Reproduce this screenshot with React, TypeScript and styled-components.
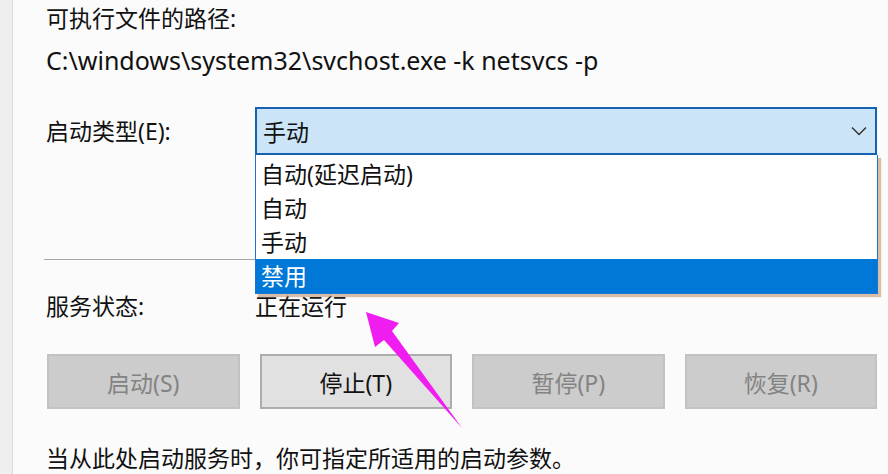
import styled, { createGlobalStyle } from "styled-components"

const GlobalStyle = createGlobalStyle`
  html, body {
    margin: 0;
    padding: 0;
    background: #fbfbfb;
  }
  body {
    font-family: "Noto Sans", "Noto Sans CJK SC", sans-serif;
    color: #111;
  }
`

const Window = styled.div`
  width: 888px;
  height: 474px;
  overflow: hidden;
  display: flex;
  position: relative;
  background: #fbfbfb;
`

const SideStrip = styled.div`
  width: 12px;
  flex: none;
  background: #efefef;
  border-right: 1px solid #dadada;
`

const Content = styled.div`
  flex: 1;
  padding: 3px 11px 0 33px;
  display: flex;
  flex-direction: column;
`

const Text = styled.div<{ $top?: number; $size?: number }>`
  font-size: ${(p) => p.$size ?? 23}px;
  line-height: 30px;
  height: 30px;
  white-space: nowrap;
  margin-top: ${(p) => p.$top ?? 0}px;
  color: #111;
`

const Row = styled.div<{ $top: number }>`
  display: flex;
  align-items: center;
  margin-top: ${(p) => p.$top}px;
`

const RowLabel = styled(Text)`
  width: 209px;
  flex: none;
`

const ComboWrap = styled.div`
  position: relative;
  flex: 1;
`

const Combo = styled.div`
  height: 48px;
  box-sizing: border-box;
  border: 2px solid #1762b0;
  background: #cce4f7;
  display: flex;
  align-items: center;
  justify-content: space-between;
  padding: 0 8px 0 6px;
  font-size: 23px;
`

const DropList = styled.div`
  position: absolute;
  top: 100%;
  left: 0;
  right: -1px;
  z-index: 2;
  background: #fff;
  border: 1px solid #1877d2;
  border-top: none;
  padding-top: 2px;
  box-shadow: 3px 3px 1px rgba(190, 140, 100, 0.55);
`

const Option = styled.div<{ $selected?: boolean }>`
  height: 34px;
  line-height: 34px;
  padding-left: 5px;
  font-size: 23px;
  background: ${(p) => (p.$selected ? "#0078d7" : "transparent")};
  color: ${(p) => (p.$selected ? "#fff" : "#111")};
`

const Separator = styled.div`
  height: 1px;
  margin: 104px 0 0 -2px;
  background: #a8a8a8;
`

const ButtonRow = styled.div`
  display: grid;
  grid-template-columns: repeat(4, 1fr);
  gap: 20px;
  margin: 33px 0 0 1px;
`

const Button = styled.div<{ $disabled?: boolean }>`
  height: 55px;
  box-sizing: border-box;
  display: flex;
  align-items: center;
  justify-content: center;
  font-size: 23px;
  background: ${(p) => (p.$disabled ? "#cccccc" : "#e1e1e1")};
  border: 2px solid ${(p) => (p.$disabled ? "#c2c2c2" : "#adadad")};
  color: ${(p) => (p.$disabled ? "#838383" : "#111")};
`

const Chevron = () => (
  <svg width="16" height="10" viewBox="0 0 16 10">
    <polyline points="1,1.5 8,8.5 15,1.5" fill="none" stroke="#333" strokeWidth="1.5" />
  </svg>
)

const Annotation = styled.svg`
  position: absolute;
  left: 0;
  top: 0;
  pointer-events: none;
  z-index: 3;
`

const options = ["自动(延迟启动)", "自动", "手动", "禁用"]
const buttons = [
  { label: "启动(S)", disabled: true },
  { label: "停止(T)", disabled: false },
  { label: "暂停(P)", disabled: true },
  { label: "恢复(R)", disabled: true },
]

export default function App() {
  return (
    <>
      <GlobalStyle />
      <Window>
        <SideStrip />
        <Content>
          <Text>可执行文件的路径:</Text>
          <Text $top={12} $size={25}>
            C:\windows\system32\svchost.exe -k netsvcs -p
          </Text>

          <Row $top={32}>
            <RowLabel>启动类型(E):</RowLabel>
            <ComboWrap>
              <Combo>
                <span>手动</span>
                <Chevron />
              </Combo>
              <DropList>
                {options.map((o) => (
                  <Option key={o} $selected={o === "禁用"}>
                    {o}
                  </Option>
                ))}
              </DropList>
            </ComboWrap>
          </Row>

          <Separator />

          <Row $top={31}>
            <RowLabel>服务状态:</RowLabel>
            <Text>正在运行</Text>
          </Row>

          <ButtonRow>
            {buttons.map((b) => (
              <Button key={b.label} $disabled={b.disabled}>
                {b.label}
              </Button>
            ))}
          </ButtonRow>

          <Text $top={34}>当从此处启动服务时，你可指定所适用的启动参数。</Text>
        </Content>

        <Annotation width="888" height="474" viewBox="0 0 888 474">
          <polygon
            points="366,312 399,323 392,331 462,428 384,340 375,347"
            fill="#f01df0"
          />
        </Annotation>
      </Window>
    </>
  )
}
